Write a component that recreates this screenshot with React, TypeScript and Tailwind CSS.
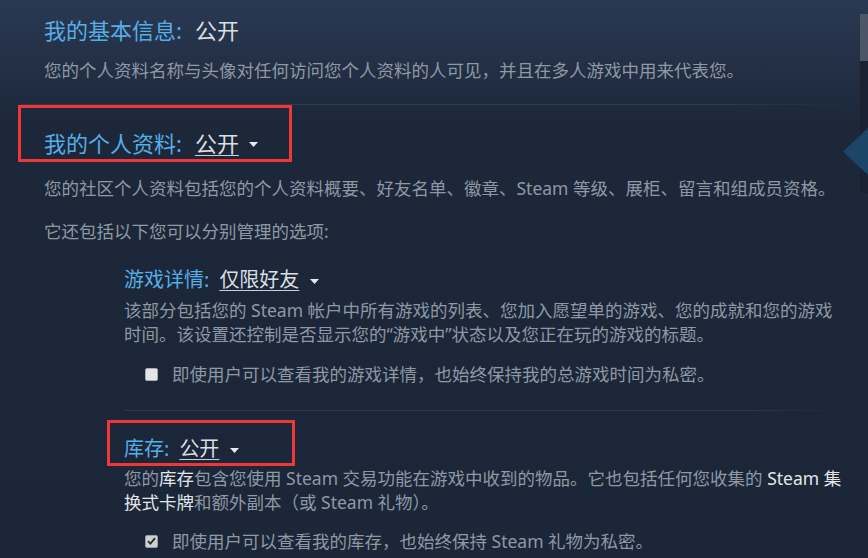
import React from "react";

const font = { fontFamily: '"Noto Sans", "Noto Sans CJK SC", sans-serif' };

function Caret({ className = "" }: { className?: string }) {
  return (
    <svg width="9" height="5" viewBox="0 0 9 5" className={className}>
      <path d="M0 0 H9 L4.5 5 Z" fill="#e6e8ea" />
    </svg>
  );
}

function Checkbox({ checked }: { checked?: boolean }) {
  return (
    <span
      className={`inline-flex items-center justify-center w-[13px] h-[13px] rounded-[2px] border ${
        checked ? "bg-[#cfd0d2] border-[#9a9da2]" : "bg-[#e4e5e7] border-[#a8abb0]"
      }`}
    >
      {checked && (
        <svg width="9" height="8" viewBox="0 0 9 8">
          <path d="M1 4.2 L3.4 6.6 L8 1.2" stroke="#2a2a2a" strokeWidth="1.8" fill="none" />
        </svg>
      )}
    </span>
  );
}

export default function App() {
  return (
    <div
      className="relative w-[868px] h-[558px] overflow-hidden bg-[linear-gradient(180deg,#2a3953_0px,#1c2739_125px,#1b2738_558px)]"
      style={font}
    >
      <div className="flex flex-col pl-[44px] w-[846px]">
        {/* Section 1 */}
        <div className="mt-[15px] text-[22px] leading-[30px] flex items-center">
          <span className="text-[#55aee6]">我的基本信息:</span>
          <span className="ml-[13px] text-[#dcdfe2]">公开</span>
        </div>
        <div className="mt-[13px] text-[17.5px] leading-[24px] text-[#8f98a5] whitespace-nowrap">
          您的个人资料名称与头像对任何访问您个人资料的人可见，并且在多人游戏中用来代表您。
        </div>

        <div className="mt-[22px] -ml-[24px] h-px bg-[linear-gradient(90deg,#2e3a4d_0%,#2e3a4d_85%,rgba(46,58,77,0)_100%)]" />

        {/* Section 2 */}
        <div className="relative mt-[23px] text-[22px] leading-[30px] flex items-center">
          <span className="text-[#55aee6]">我的个人资料:</span>
          <span className="ml-[13px] text-[#dcdfe2] underline underline-offset-[3px] decoration-1 decoration-[#c9cfd6]">公开</span>
          <Caret className="ml-[10px] mt-[3px]" />
          <div className="absolute left-[-26px] top-[-23px] w-[274px] h-[57px] border-[3px] border-[#ee3838]" />
        </div>
        <div className="mt-[18px] text-[17.5px] leading-[24px] text-[#8f98a5] whitespace-nowrap">
          您的社区个人资料包括您的个人资料概要、好友名单、徽章、Steam 等级、展柜、留言和组成员资格。
        </div>
        <div className="mt-[19px] text-[17.5px] leading-[24px] text-[#8f98a5]">
          它还包括以下您可以分别管理的选项:
        </div>

        {/* Sub sections */}
        <div className="ml-[80px] flex flex-col">
          <div className="mt-[23px] text-[20px] leading-[28px] flex items-center">
            <span className="text-[#55aee6]">游戏详情:</span>
            <span className="ml-[10px] text-[#dcdfe2] underline underline-offset-[3px] decoration-1 decoration-[#c9cfd6]">仅限好友</span>
            <Caret className="ml-[11px] mt-[3px]" />
          </div>
          <div className="mt-[4px] text-[17.5px] leading-[24px] text-[#8f98a5] whitespace-nowrap">
            该部分包括您的 Steam 帐户中所有游戏的列表、您加入愿望单的游戏、您的成就和您的游戏
            <br />
            时间。该设置还控制是否显示您的“游戏中”状态以及您正在玩的游戏的标题。
          </div>
          <div className="mt-[16px] ml-[21px] flex items-center gap-[14px] text-[17.5px] leading-[24px] text-[#8f98a5]">
            <Checkbox />
            <span>即使用户可以查看我的游戏详情，也始终保持我的总游戏时间为私密。</span>
          </div>

          <div className="mt-[24px] h-px w-[720px] bg-[linear-gradient(90deg,#2e3a4d_0%,#2e3a4d_85%,rgba(46,58,77,0)_100%)]" />

          <div className="relative mt-[24px] text-[20px] leading-[28px] flex items-center">
            <span className="text-[#55aee6]">库存:</span>
            <span className="ml-[10px] text-[#dcdfe2] underline underline-offset-[3px] decoration-1 decoration-[#c9cfd6]">公开</span>
            <Caret className="ml-[11px] mt-[3px]" />
            <div className="absolute left-[-17px] top-[-15px] w-[188px] h-[46px] border-[3px] border-[#ee3838]" />
          </div>
          <div className="mt-[3px] text-[17.5px] leading-[24px] text-[#8f98a5] whitespace-nowrap">
            您的<span className="text-[#e3e6e9]">库存</span>包含您使用 Steam 交易功能在游戏中收到的物品。它也包括任何您收集的 <span className="text-[#e3e6e9]">Steam 集</span>
            <br />
            <span className="text-[#e3e6e9]">换式卡牌</span>和额外副本（或 Steam 礼物）。
          </div>
          <div className="mt-[15px] ml-[21px] flex items-center gap-[14px] text-[17.5px] leading-[24px] text-[#8f98a5]">
            <Checkbox checked />
            <span>即使用户可以查看我的库存，也始终保持 Steam 礼物为私密。</span>
          </div>
        </div>
      </div>

      {/* Scrollbar */}
      <div className="absolute right-0 top-[14px] w-[8px] h-[179px] bg-[#1a2231]">
        <div className="w-full h-[47px] bg-[#4b5668]" />
      </div>
      {/* Side arrow */}
      <svg className="absolute right-0 top-[128px]" width="25" height="47" viewBox="0 0 25 47">
        <path d="M0 23.5 L25 0 L25 47 Z" fill="#1c4a6e" fillOpacity="0.9" />
      </svg>
    </div>
  );
}
